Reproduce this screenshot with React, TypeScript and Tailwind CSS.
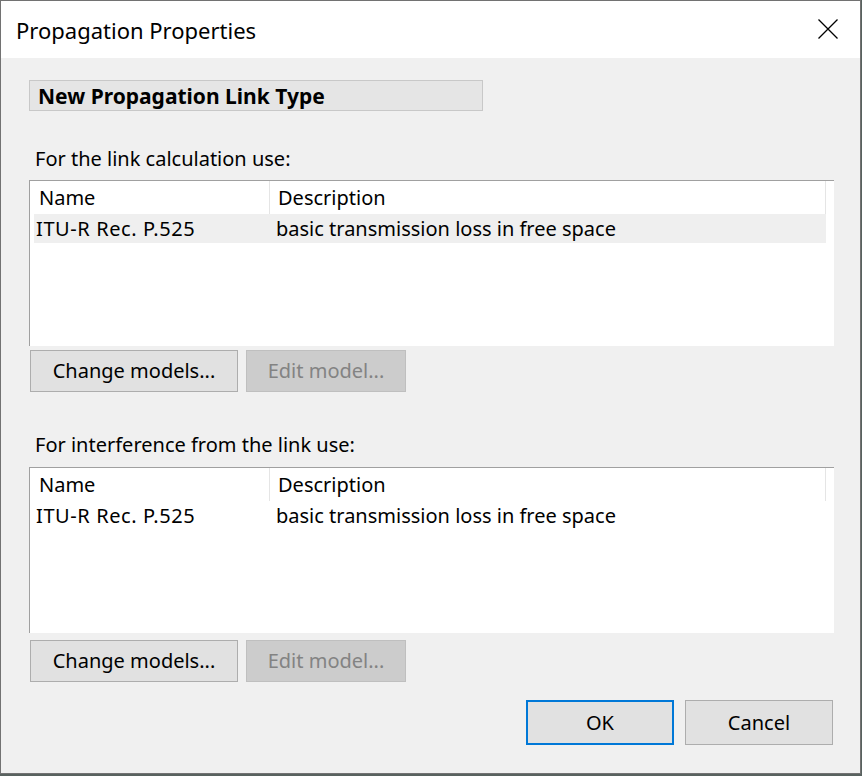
import React from "react";

const font = { fontFamily: '"Noto Sans", "Open Sans", sans-serif' };

function ListBox({ selected }: { selected: boolean }) {
  return (
    <div className="w-[805px] h-[166px] bg-white border-t border-l border-[#a0a0a0] flex flex-col">
      <div className="h-[33px] flex shrink-0">
        <div className="w-[240px] h-full flex items-center pl-[9px] border-r border-[#e5e5e5]">Name</div>
        <div className="w-[556px] h-full flex items-center pl-[8px] border-r border-[#e5e5e5]">Description</div>
      </div>
      <div className={"h-[29px] ml-[4px] w-[792px] flex items-center shrink-0 " + (selected ? "bg-[#efefef]" : "bg-white")}>
        <div className="w-[235px] pl-[2px] tracking-[0.6px]">ITU-R Rec. P.525</div>
        <div className="pl-[7px]">basic transmission loss in free space</div>
      </div>
    </div>
  );
}

function ButtonsRow() {
  return (
    <div className="flex gap-[8px] h-[42px]">
      <div className="w-[208px] h-full bg-[#e1e1e1] border border-[#adadad] flex items-center justify-center">
        Change models...
      </div>
      <div className="w-[160px] h-full bg-[#cccccc] border border-[#bfbfbf] flex items-center justify-center text-[#838383]">
        Edit model...
      </div>
    </div>
  );
}

export default function App() {
  return (
    <div className="w-[862px] h-[776px] bg-[#58625f]" style={font}>
      <div className="w-[861px] h-[774px] border border-[#727272] bg-[#f0f0f0] flex flex-col text-[20px] leading-[24px] text-black">
        <div className="h-[57px] bg-white flex items-center justify-between shrink-0">
          <div className="pl-[15px] text-[22px] pt-[1px]">Propagation Properties</div>
          <svg width="20" height="20" viewBox="0 0 20 20" className="mr-[22px] mt-[-1px]">
            <path d="M0.5 0.5 L19.5 19.5 M19.5 0.5 L0.5 19.5" stroke="#000" strokeWidth="1.3" fill="none" />
          </svg>
        </div>
        <div className="flex flex-col pl-[28px]">
          <div className="mt-[22px] w-[454px] h-[31px] bg-[#e5e5e5] border border-[#c8c8c8] flex items-center pl-[8px] font-bold text-[21px]">
            New Propagation Link Type
          </div>
          <div className="mt-[36px] h-[24px] pl-[6px]">For the link calculation use:</div>
          <div className="mt-[9px]">
            <ListBox selected={true} />
          </div>
          <div className="mt-[4px] pl-[1px]">
            <ButtonsRow />
          </div>
          <div className="mt-[41px] h-[24px] pl-[6px]">For interference from the link use:</div>
          <div className="mt-[10px]">
            <ListBox selected={false} />
          </div>
          <div className="mt-[7px] pl-[1px]">
            <ButtonsRow />
          </div>
          <div className="mt-[18px] flex justify-end gap-[11px] pr-[27px] h-[45px]">
            <div className="w-[148px] h-full bg-[#e1e1e1] border-2 border-[#0078d7] flex items-center justify-center">OK</div>
            <div className="w-[148px] h-full bg-[#e1e1e1] border border-[#adadad] flex items-center justify-center">Cancel</div>
          </div>
        </div>
      </div>
    </div>
  );
}
